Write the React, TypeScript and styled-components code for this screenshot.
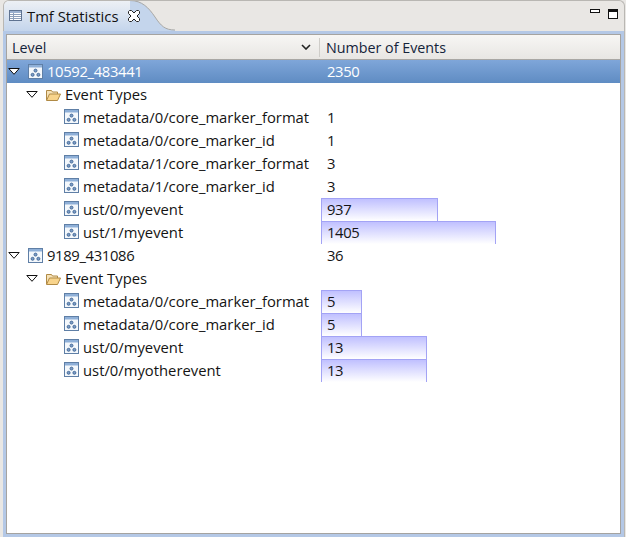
import styled, { createGlobalStyle } from 'styled-components';

const GlobalStyle = createGlobalStyle`
  html, body {
    margin: 0;
    padding: 0;
    background: #e9e7e4;
  }
  body {
    font-family: 'Open Sans', 'Noto Sans', sans-serif;
    font-size: 14.8px;
    color: #141414;
  }
`;

type Row = {
  label: string;
  value: string;
  depth: number;
  kind: 'trace' | 'group' | 'event';
  barWidth?: number;
  selected?: boolean;
};

const rows: Row[] = [
  { label: '10592_483441', value: '2350', depth: 0, kind: 'trace', selected: true },
  { label: 'Event Types', value: '', depth: 1, kind: 'group' },
  { label: 'metadata/0/core_marker_format', value: '1', depth: 2, kind: 'event' },
  { label: 'metadata/0/core_marker_id', value: '1', depth: 2, kind: 'event' },
  { label: 'metadata/1/core_marker_format', value: '3', depth: 2, kind: 'event' },
  { label: 'metadata/1/core_marker_id', value: '3', depth: 2, kind: 'event' },
  { label: 'ust/0/myevent', value: '937', depth: 2, kind: 'event', barWidth: 117 },
  { label: 'ust/1/myevent', value: '1405', depth: 2, kind: 'event', barWidth: 175 },
  { label: '9189_431086', value: '36', depth: 0, kind: 'trace' },
  { label: 'Event Types', value: '', depth: 1, kind: 'group' },
  { label: 'metadata/0/core_marker_format', value: '5', depth: 2, kind: 'event', barWidth: 41 },
  { label: 'metadata/0/core_marker_id', value: '5', depth: 2, kind: 'event', barWidth: 41 },
  { label: 'ust/0/myevent', value: '13', depth: 2, kind: 'event', barWidth: 106 },
  { label: 'ust/0/myotherevent', value: '13', depth: 2, kind: 'event', barWidth: 106 },
];

const TableIcon = () => (
  <TabGlyph width="13" height="11" viewBox="0 0 13 11">
    <rect x="0.5" y="0.5" width="12" height="10" fill="#fff" stroke="#5f7391" />
    <rect x="1" y="1" width="11" height="2" fill="#9db2d0" />
    <path d="M1 4.5h11M1 6.5h11M1 8.5h11M4.5 3v7" stroke="#8ea0ba" strokeWidth="1" fill="none" />
  </TabGlyph>
);

const CloseIcon = () => (
  <TabGlyph width="12" height="12" viewBox="0 0 12 12">
    <path
      d="M1.5 0.5h2L6 3l2.5-2.5h2l1 1v2L9 6l2.5 2.5v2l-1 1h-2L6 9l-2.5 2.5h-2l-1-1v-2L3 6 .5 3.5v-2z"
      fill="#fff"
      stroke="#222"
      strokeWidth="1"
    />
  </TabGlyph>
);

const Arrow = () => (
  <svg width="12" height="7" viewBox="0 0 12 7">
    <path d="M0.8 0.5h10.4L6 6.3z" fill="#fff" stroke="#111" strokeWidth="1" />
  </svg>
);

const FolderIcon = () => (
  <svg width="16" height="12" viewBox="0 0 16 12">
    <path d="M1.5 11V1.5h5l1 1.5h5v2" fill="#f6e2b8" stroke="#b08a45" strokeWidth="1" />
    <path d="M1.5 11.5L4.5 5h11l-3 6.5z" fill="#f8d48c" stroke="#b08a45" strokeWidth="1" />
  </svg>
);

const EventIcon = () => (
  <svg width="15" height="15" viewBox="0 0 15 15">
    <rect x="0.5" y="0.5" width="14" height="14" fill="#f4f8fc" stroke="#5f7fa6" />
    <rect x="1" y="1" width="13" height="2.5" fill="#8fb0d8" />
    <circle cx="7.5" cy="6.6" r="1.5" fill="#7b9cc6" stroke="#3f6594" strokeWidth="0.9" />
    <circle cx="4.6" cy="10.8" r="1.5" fill="#7b9cc6" stroke="#3f6594" strokeWidth="0.9" />
    <circle cx="10.4" cy="10.8" r="1.5" fill="#7b9cc6" stroke="#3f6594" strokeWidth="0.9" />
  </svg>
);

const App = () => (
  <>
    <GlobalStyle />
    <Page>
      <TabBar>
        <Tab>
          <TableIcon />
          <TabTitle>Tmf Statistics</TabTitle>
          <CloseIcon />
        </Tab>
        <TabCurve width="45" height="31" viewBox="0 0 45 31">
          <path d="M0 0 C12 0 19 8 25 17 C31 26 35 30 45 30 L45 31 L0 31 Z" fill="#c4d5ec" />
          <path d="M0 0.5 C12 0.5 19 8 25 17 C31 26 35 30 45 30" fill="none" stroke="#a9a8a5" />
        </TabCurve>
        <WindowButtons>
          <MinimizeButton />
          <MaximizeButton />
        </WindowButtons>
      </TabBar>
      <Frame>
        <Table>
          <HeaderRow>
            <LevelHeader>
              Level
              <SortIcon width="10" height="6" viewBox="0 0 10 6">
                <path d="M1 1l4 4 4-4" fill="none" stroke="#222" strokeWidth="1.6" />
              </SortIcon>
            </LevelHeader>
            <CountHeader>Number of Events</CountHeader>
          </HeaderRow>
          {rows.map((row, i) => (
            <TreeRow key={i} $selected={row.selected}>
              <LevelCell $depth={row.depth}>
                <ArrowSlot>{row.kind !== 'event' && <Arrow />}</ArrowSlot>
                <IconSlot $kind={row.kind}>{row.kind === 'group' ? <FolderIcon /> : <EventIcon />}</IconSlot>
                <Label $tight={row.kind === 'trace'}>{row.label}</Label>
              </LevelCell>
              <CountCell>
                {row.barWidth && <Bar style={{ width: row.barWidth }} />}
                <CountValue>{row.value}</CountValue>
              </CountCell>
            </TreeRow>
          ))}
        </Table>
      </Frame>
    </Page>
  </>
);

export default App;

const Page = styled.div`
  width: 626px;
  height: 537px;
  box-sizing: border-box;
  padding: 0 1px 0 3px;
  display: flex;
  flex-direction: column;
  overflow: hidden;
`;

const TabBar = styled.div`
  height: 31px;
  flex: none;
  display: flex;
  border-top: 1px solid #b9b7b3;
  border-right: 1px solid #b9b7b3;
  border-left: 1px solid #b9b7b3;
  border-radius: 6px 6px 0 0;
  box-sizing: border-box;
  overflow: hidden;
`;

const Tab = styled.div`
  width: 126px;
  flex: none;
  position: relative;
  z-index: 1;
  display: flex;
  align-items: center;
  padding-left: 5px;
  box-sizing: border-box;
  background: linear-gradient(#eef1f5, #c4d5ec);
  margin-top: -1px;
`;

const TabGlyph = styled.svg`
  flex: none;
`;

const TabTitle = styled.span`
  flex: none;
  color: #111;
  margin: 0 9px 0 5px;
  white-space: nowrap;
`;

const TabCurve = styled.svg`
  flex: none;
  margin-top: -1px;
`;

const WindowButtons = styled.div`
  margin-left: auto;
  padding: 8px 6px 0 0;
  display: flex;
  align-items: flex-start;
  gap: 8px;
`;

const MinimizeButton = styled.div`
  width: 8px;
  height: 2px;
  background: #fff;
  border: 1px solid #111;
`;

const MaximizeButton = styled.div`
  width: 8px;
  height: 6px;
  background: #fff;
  border: 1px solid #111;
  border-top-width: 3px;
`;

const Frame = styled.div`
  flex: 1;
  display: flex;
  background: #b4c8e6;
  padding: 3px 3px 3px 3px;
  border-right: 1px solid #b9b7b3;
`;

const Table = styled.div`
  flex: 1;
  background: #fff;
  border: 1px solid #a5a3a0;
`;

const HeaderRow = styled.div`
  height: 25px;
  box-sizing: border-box;
  display: flex;
  align-items: center;
  background: linear-gradient(#f7f6f4, #e8e6e3);
  border-bottom: 1px solid #a9a7a4;
  color: #14233a;
  font-size: 14.3px;
`;

const LevelHeader = styled.div`
  width: 313px;
  box-sizing: border-box;
  height: 19px;
  padding: 0 8px 0 5px;
  display: flex;
  align-items: center;
  justify-content: space-between;
  border-right: 1px solid #cfcdc9;
`;

const SortIcon = styled.svg`
  flex: none;
`;

const CountHeader = styled.div`
  flex: 1;
  padding-left: 6px;
`;

const TreeRow = styled.div<{ $selected?: boolean }>`
  height: 23px;
  display: flex;
  align-items: stretch;
  background: ${(p) => (p.$selected ? 'linear-gradient(#7fa6d9, #5f8cc3)' : 'transparent')};
  color: ${(p) => (p.$selected ? '#fff' : '#141414')};
`;

const LevelCell = styled.div<{ $depth: number }>`
  width: 314px;
  box-sizing: border-box;
  padding-left: ${(p) => 1 + p.$depth * 18}px;
  display: flex;
  align-items: center;
  white-space: nowrap;
`;

const ArrowSlot = styled.span`
  width: 20px;
  flex: none;
  display: flex;
  align-items: center;
`;

const IconSlot = styled.span<{ $kind: Row['kind'] }>`
  width: ${(p) => (p.$kind === 'group' ? 19 : 18)}px;
  margin-right: 1px;
  margin-left: ${(p) => (p.$kind === 'group' ? -1 : 0)}px;
  margin-bottom: ${(p) => (p.$kind === 'event' ? 2 : 0)}px;
  flex: none;
  display: flex;
  align-items: center;
`;

const Label = styled.span<{ $tight: boolean }>`
  padding-bottom: 2px;
  letter-spacing: ${(p) => (p.$tight ? '-0.35px' : '0')};
`;

const CountCell = styled.div`
  flex: 1;
  position: relative;
  display: flex;
  align-items: center;
`;

const Bar = styled.div`
  position: absolute;
  left: 0;
  top: 0;
  bottom: 0;
  box-sizing: border-box;
  background: linear-gradient(#c0c0ff, #fff);
  border: 1px solid #a3a3f5;
  border-bottom: none;
`;

const CountValue = styled.span`
  position: relative;
  padding: 0 0 2px 6px;
  letter-spacing: -0.35px;
`;
